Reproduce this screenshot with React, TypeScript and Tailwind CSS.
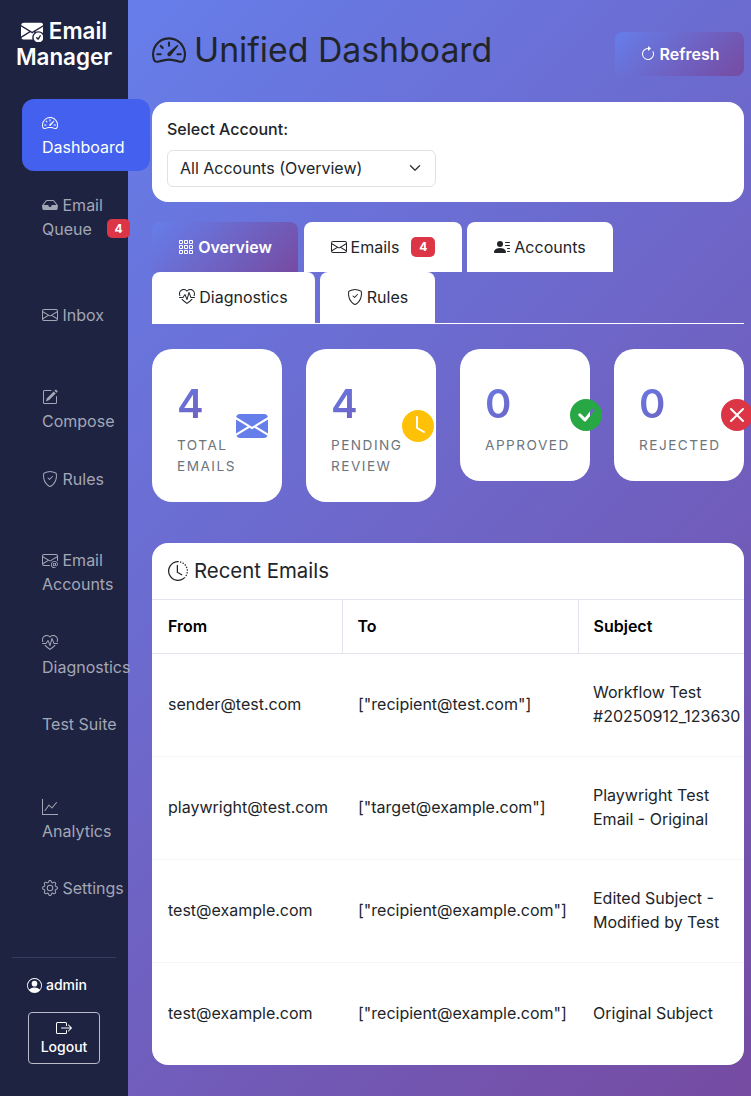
import React from 'react';
import {
  BsSpeedometer2, BsEnvelopeCheckFill, BsInboxFill, BsEnvelope, BsPencilSquare, BsShieldCheck,
  BsEnvelopeAt, BsHeartPulse, BsGraphUp, BsGear, BsPersonCircle, BsBoxArrowRight,
  BsArrowClockwise, BsGrid3X3Gap, BsPersonLinesFill, BsClockHistory, BsEnvelopeFill,
  BsClockFill, BsCheckCircleFill, BsXCircleFill, BsChevronDown,
} from 'react-icons/bs';

const NavItem = ({ icon, label, rest, mt, active, badge }: any) => (
  <div className={`${mt} relative ml-[22px] w-[128px] shrink-0 rounded-xl px-5 py-3 text-base leading-6 ${active ? 'bg-[#4361ee] text-white' : 'text-[#a3a7b5]'}`}>
    {icon} {label}
    {rest && <div>{rest}</div>}
    {badge && (
      <span className="absolute left-[85px] top-[38px] flex h-[19px] w-[23px] items-center justify-center rounded-[5px] bg-[#dc3545] text-xs font-bold text-white">{badge}</span>
    )}
  </div>
);

const StatCard = ({ value, label, icon }: any) => (
  <div className="flex w-[130px] items-center rounded-[20px] bg-white pb-[25px] pl-[25px] pt-[25px]">
    <div className="w-min">
      <div className="bg-[linear-gradient(135deg,#667eea,#764ba2)] bg-clip-text text-[40px] font-semibold leading-[60px] text-transparent">{value}</div>
      <div className="mt-px text-[13.6px] uppercase leading-[21px] tracking-[1.5px] text-[#6c757d]">{label}</div>
    </div>
    {icon}
  </div>
);

const rows = [
  ['sender@test.com', '["recipient@test.com"]', 'Workflow Test #20250912_123630'],
  ['playwright@test.com', '["target@example.com"]', 'Playwright Test Email - Original'],
  ['test@example.com', '["recipient@example.com"]', 'Edited Subject - Modified by Test'],
  ['test@example.com', '["recipient@example.com"]', 'Original Subject'],
];

const tabClass = 'flex items-center justify-center rounded-t-lg bg-white text-base text-[#212529]';

export default function App() {
  return (
    <div className="flex w-[751px] overflow-hidden font-['Inter',sans-serif]">
      {/* Sidebar */}
      <div className="flex h-[1096px] w-[128px] shrink-0 flex-col bg-[#1e2342] shadow-[0_4px_12px_rgba(0,0,0,0.1)]">
        <div className="mt-[18px] h-[54px] text-center text-[22.4px] font-semibold leading-[26px] text-white">
          <BsEnvelopeCheckFill className="inline-block align-[-3px]" /> Email Manager
        </div>
        <NavItem mt="mt-[27px]" active icon={<BsSpeedometer2 className="inline-block align-[-2px]" />} rest="Dashboard" />
        <NavItem mt="mt-[10px]" icon={<BsInboxFill className="inline-block align-[-2px]" />} label="Email" rest="Queue" badge="4" />
        <NavItem mt="mt-[38px]" icon={<BsEnvelope className="inline-block align-[-2px]" />} label="Inbox" />
        <NavItem mt="mt-[34px]" icon={<BsPencilSquare className="inline-block align-[-2px]" />} rest="Compose" />
        <NavItem mt="mt-[10px]" icon={<BsShieldCheck className="inline-block align-[-2px]" />} label="Rules" />
        <NavItem mt="mt-[33px]" icon={<BsEnvelopeAt className="inline-block align-[-2px]" />} label="Email" rest="Accounts" />
        <NavItem mt="mt-[11px]" icon={<BsHeartPulse className="inline-block align-[-2px]" />} rest="Diagnostics" />
        <NavItem mt="mt-[9px]" label="Test Suite" />
        <NavItem mt="mt-[35px]" icon={<BsGraphUp className="inline-block align-[-2px]" />} rest="Analytics" />
        <NavItem mt="mt-[9px]" icon={<BsGear className="inline-block align-[-2px]" />} label="Settings" />

        <div className="mx-3 mt-auto border-t border-[#363c5e] pt-[17px]">
          <div className="flex items-center gap-1 pl-[15px] text-sm font-medium leading-5 text-white">
            <BsPersonCircle className="size-[15px]" /> admin
          </div>
          <div className="mx-auto mb-[32px] mt-[17px] flex h-[52px] w-[72px] flex-col items-center justify-center rounded border border-[#b9bbc6] text-sm font-medium leading-[21px] text-white">
            <BsBoxArrowRight className="size-4" />
            Logout
          </div>
        </div>
      </div>

      {/* Main */}
      <div className="h-[1096px] w-[623px] shrink-0 bg-[linear-gradient(135deg,#667eea,#764ba2)] pl-6 pr-[7px] pt-8">
        <div className="flex h-[44px] items-start justify-between">
          <h1 className="flex items-center gap-2 text-[33.8px] font-normal leading-[36px] text-[#212529]">
            <BsSpeedometer2 className="size-[34px]" /> Unified Dashboard
          </h1>
          <button className="flex h-[44px] w-[129px] items-center justify-center gap-1 rounded-lg bg-[linear-gradient(135deg,#667eea,#764ba2)] text-base font-semibold text-white">
            <BsArrowClockwise className="size-4" /> Refresh
          </button>
        </div>

        <div className="mt-[26px] h-[100px] rounded-2xl bg-white px-[15px] pt-4">
          <div className="text-base font-medium leading-[22px] text-[#212529]">Select Account:</div>
          <div className="mt-[10px] flex h-[37px] w-[269px] items-center justify-between rounded-md border border-[#dee2e6] pb-px pl-3 pr-[14px] text-base text-[#212529]">
            All Accounts (Overview)
            <BsChevronDown className="size-3" strokeWidth={1} />
          </div>
        </div>

        {/* Tabs */}
        <div className="mt-5 border-b border-white">
          <div className="flex h-[50px] gap-[5px]">
            <div className="mr-px flex w-[146px] items-center justify-center gap-1 rounded-t-lg bg-[linear-gradient(135deg,#667eea,#764ba2)] text-base font-semibold text-white">
              <BsGrid3X3Gap className="size-4" /> Overview
            </div>
            <div className={`${tabClass} w-[158px]`}>
              <BsEnvelope className="mr-1 size-4" /> Emails
              <span className="ml-3 flex h-[20px] w-[24px] items-center justify-center rounded-[5px] bg-[#dc3545] text-xs font-bold text-white">4</span>
            </div>
            <div className={`${tabClass} w-[146px] gap-1`}>
              <BsPersonLinesFill className="size-4" /> Accounts
            </div>
          </div>
          <div className="flex h-[51px] gap-[5px]">
            <div className={`${tabClass} w-[163px] gap-1 pb-px`}>
              <BsHeartPulse className="size-4" /> Diagnostics
            </div>
            <div className={`${tabClass} w-[115px] gap-1 pb-px`}>
              <BsShieldCheck className="size-4" /> Rules
            </div>
          </div>
        </div>

        {/* Stats */}
        <div className="mt-[25px] flex items-start gap-6">
          <StatCard value="4" label="Total Emails" icon={<BsEnvelopeFill className="size-8 shrink-0 text-[#667eea]" />} />
          <StatCard value="4" label="Pending Review" icon={<BsClockFill className="size-8 shrink-0 text-[#ffc107]" />} />
          <StatCard value="0" label="Approved" icon={<BsCheckCircleFill className="size-8 shrink-0 text-[#28a745]" />} />
          <StatCard value="0" label="Rejected" icon={<BsXCircleFill className="size-8 shrink-0 text-[#dc3545]" />} />
        </div>

        {/* Recent emails */}
        <div className="mt-[41px] h-[522px] overflow-hidden rounded-2xl bg-white">
          <div className="flex h-[57px] items-center gap-[6px] border-b border-[#e4e4f0] px-4 text-[20.4px] font-normal text-[#212529]">
            <BsClockHistory className="size-5" /> Recent Emails
          </div>
          <table className="w-[592px] table-fixed text-base text-[#212529]">
            <thead>
              <tr className="h-[53px] border-b border-[#e4e4f0] text-left text-black">
                <th className="w-[190px] border-r border-[#e4e4f0] px-4 font-semibold">From</th>
                <th className="w-[236px] border-r border-[#e4e4f0] px-[15px] font-semibold">To</th>
                <th className="px-[15px] font-semibold">Subject</th>
              </tr>
            </thead>
            <tbody>
              {rows.map((row, i) => (
                <tr key={i} className="h-[103px] border-b border-[#f5f5f5] last:border-0">
                  <td className="px-4 pb-[2px]">{row[0]}</td>
                  <td className="px-4 pb-[2px]">{row[1]}</td>
                  <td className="pb-[2px] pl-[15px]">{row[2]}</td>
                </tr>
              ))}
            </tbody>
          </table>
        </div>
      </div>
    </div>
  );
}
